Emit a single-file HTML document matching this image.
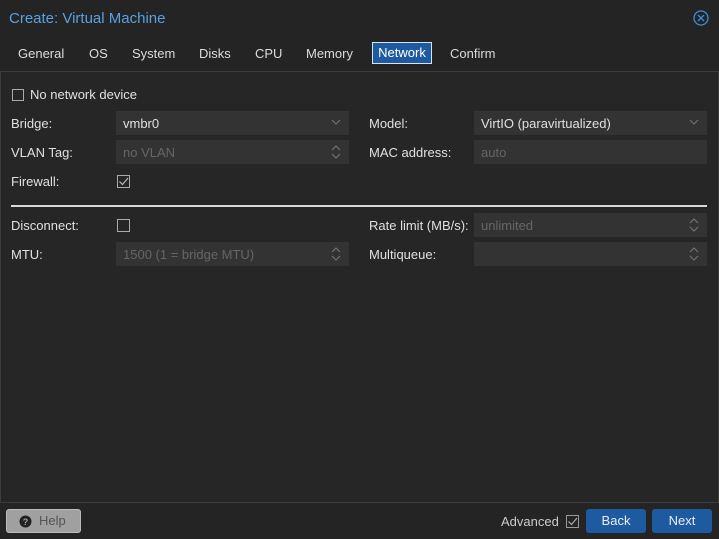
<!DOCTYPE html>
<html><head><style>
body{margin:0;width:719px;height:539px;background:#242424;font-family:"Liberation Sans",sans-serif;font-size:13px;color:#e0e0e0;position:relative;overflow:hidden}
.a{position:absolute}
.title{left:9px;top:10px;font-size:15px;color:#5aa0e0}
.tab{top:46px;font-size:13px;color:#dcdcdc}
.panel{left:0;top:71px;width:717px;height:430px;border:1px solid #3c3c3c;background:#262626}
.lbl{font-size:13px;color:#e0e0e0}
.f{background:#333;height:24px;box-sizing:border-box;padding:5px 7px;font-size:13px;color:#e0e0e0}
.f.d{color:#666}
.cb{width:12px;height:12px;border:1px solid #aaa;box-sizing:border-box}
.arr{position:absolute;right:8px;top:4px}
.btn{background:#1e5aa0;color:#e8eef8;text-align:center;border-radius:3px;font-size:13px;height:24px;line-height:24px}
</style></head><body>
<div class="a title">Create: Virtual Machine</div>
<svg class="a" style="left:693px;top:10px" width="16" height="16" viewBox="0 0 16 16"><circle cx="8" cy="8" r="7" fill="none" stroke="#3a8fd8" stroke-width="1.3"/><path d="M5 5L11 11M11 5L5 11" stroke="#3a8fd8" stroke-width="1.3"/></svg>
<div class="a tab" style="left:18px">General</div>
<div class="a tab" style="left:89px">OS</div>
<div class="a tab" style="left:132px">System</div>
<div class="a tab" style="left:199px">Disks</div>
<div class="a tab" style="left:255px">CPU</div>
<div class="a tab" style="left:306px">Memory</div>
<div class="a" style="left:372px;top:42px;width:60px;height:22px;background:#1e5aa0;border:1px solid #d8e4f4;box-sizing:border-box;color:#fff;text-align:center;line-height:20px">Network</div>
<div class="a tab" style="left:450px">Confirm</div>
<div class="a panel"></div>
<div class="a cb" style="left:12px;top:89px"></div>
<div class="a lbl" style="left:30px;top:87px">No network device</div>

<div class="a lbl" style="left:11px;top:116px">Bridge:</div>
<div class="a f" style="left:116px;top:111px;width:233px">vmbr0<svg class="arr" width="10" height="14"><path d="M1 5L5 9L9 5" stroke="#777" fill="none"/></svg></div>
<div class="a lbl" style="left:11px;top:145px">VLAN Tag:</div>
<div class="a f d" style="left:116px;top:140px;width:233px">no VLAN<svg class="arr" width="10" height="16"><path d="M1 6L5 2L9 6M1 10L5 14L9 10" stroke="#777" fill="none"/></svg></div>
<div class="a lbl" style="left:11px;top:174px">Firewall:</div>
<svg class="a" style="left:117px;top:175px" width="13" height="13"><rect x="0.5" y="0.5" width="12" height="12" fill="none" stroke="#aaa"/><path d="M2.5 6.5L5.5 9.5L11 3" stroke="#bbb" fill="none" stroke-width="1.2"/></svg>

<div class="a lbl" style="left:369px;top:116px">Model:</div>
<div class="a f" style="left:474px;top:111px;width:233px">VirtIO (paravirtualized)<svg class="arr" width="10" height="14"><path d="M1 5L5 9L9 5" stroke="#777" fill="none"/></svg></div>
<div class="a lbl" style="left:369px;top:145px">MAC address:</div>
<div class="a f d" style="left:474px;top:140px;width:233px">auto</div>

<div class="a" style="left:11px;top:205px;width:696px;height:2px;background:#d8d8d8"></div>

<div class="a lbl" style="left:11px;top:218px">Disconnect:</div>
<div class="a cb" style="left:117px;top:219px;width:13px;height:13px"></div>
<div class="a lbl" style="left:11px;top:247px">MTU:</div>
<div class="a f d" style="left:116px;top:242px;width:233px">1500 (1 = bridge MTU)<svg class="arr" width="10" height="16"><path d="M1 6L5 2L9 6M1 10L5 14L9 10" stroke="#777" fill="none"/></svg></div>
<div class="a lbl" style="left:369px;top:218px">Rate limit (MB/s):</div>
<div class="a f d" style="left:474px;top:213px;width:233px">unlimited<svg class="arr" width="10" height="16"><path d="M1 6L5 2L9 6M1 10L5 14L9 10" stroke="#777" fill="none"/></svg></div>
<div class="a lbl" style="left:369px;top:247px">Multiqueue:</div>
<div class="a f" style="left:474px;top:242px;width:233px"><svg class="arr" width="10" height="16"><path d="M1 6L5 2L9 6M1 10L5 14L9 10" stroke="#777" fill="none"/></svg></div>

<div class="a" style="left:6px;top:509px;width:75px;height:24px;background:#a0a0a0;border:1px solid #bbb;box-sizing:border-box;border-radius:3px;color:#555;line-height:22px"><svg style="position:absolute;left:12px;top:5px" width="13" height="13"><circle cx="6.5" cy="6.5" r="6" fill="#222"/><text x="6.5" y="10" font-size="9" font-weight="bold" fill="#a0a0a0" text-anchor="middle" font-family="Liberation Sans">?</text></svg><span style="position:absolute;left:32px">Help</span></div>
<div class="a" style="left:501px;top:514px;color:#ccc">Advanced</div>
<svg class="a" style="left:566px;top:515px" width="13" height="13"><rect x="0.5" y="0.5" width="12" height="12" fill="none" stroke="#999"/><path d="M2.5 6.5L5.5 9.5L11 3" stroke="#aaa" fill="none" stroke-width="1.2"/></svg>
<div class="a btn" style="left:586px;top:509px;width:60px">Back</div>
<div class="a btn" style="left:652px;top:509px;width:60px">Next</div>
</body></html>
